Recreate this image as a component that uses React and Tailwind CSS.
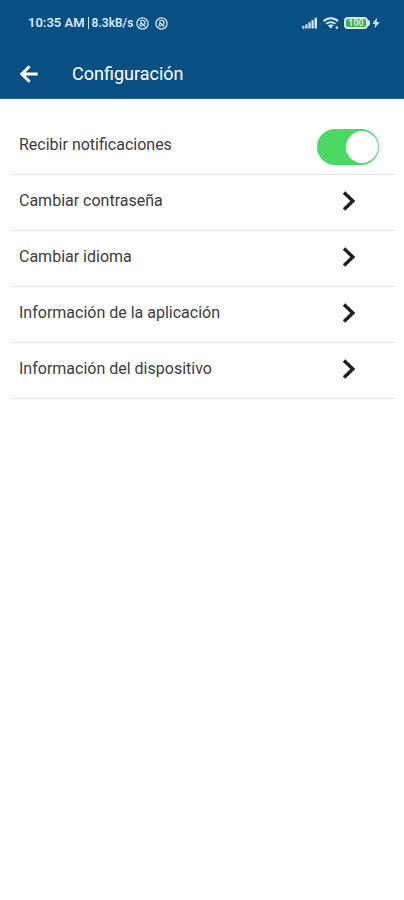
import React, { useState } from "react";

const options = [
  "Cambiar contraseña",
  "Cambiar idioma",
  "Información de la aplicación",
  "Información del dispositivo",
];

function NfcIcon() {
  return (
    <svg viewBox="0 0 13 13" className="w-[13px] h-[13px]" fill="none" stroke="currentColor" aria-hidden="true">
      <circle cx="6.5" cy="6.5" r="5.6" strokeWidth="1.3" />
      <path d="M4 4.2C5.4 3.3 7.4 3.3 8.9 4.4V7.6" strokeWidth="1.3" />
      <path d="M4.4 5.4L9 9.4" strokeWidth="1.5" />
      <path d="M4.1 6.6V9H6.4" strokeWidth="1.2" />
    </svg>
  );
}

function SignalIcon() {
  return (
    <svg viewBox="0 0 16 12" className="w-4 h-3" fill="currentColor" aria-hidden="true">
      <rect x="0.2" y="9" width="2.2" height="2.5" />
      <rect x="3.3" y="7.4" width="2.2" height="4.1" />
      <rect x="6.4" y="5.2" width="2.2" height="6.3" />
      <rect x="9.5" y="3" width="2.2" height="8.5" />
      <rect x="12.6" y="0.8" width="2.4" height="10.7" />
    </svg>
  );
}

function WifiIcon() {
  return (
    <svg viewBox="0 0 16 12" className="w-4 h-3" fill="none" stroke="currentColor" aria-hidden="true">
      <path d="M0.6 4.2C4.6 0.3 11 0.3 15 4.2" strokeWidth="2" />
      <path d="M3.2 6.9C5.8 4.4 9.8 4.4 12.4 6.9" strokeWidth="1.8" />
      <path d="M5 8.6C6.6 7 9 7 10.6 8.6L7.8 11.6Z" fill="currentColor" stroke="none" />
      <path d="M12.6 10.6H15M13.8 9.2V12" strokeWidth="1.2" />
    </svg>
  );
}

function StatusBar() {
  return (
    <div className="h-[46px] flex items-center justify-between pl-7 pr-6 text-[#d9e8f3]">
      <div className="flex items-center text-[12px] leading-4 font-semibold">
        <span className="text-[13px]">10:35 AM</span>
        <span className="mx-[3px] w-px h-3 bg-[#d9e8f3]" />
        <span>8.3kB/s</span>
        <span className="ml-[3px] flex gap-[6px]">
          <NfcIcon />
          <NfcIcon />
        </span>
      </div>
      <div className="flex items-center">
        <SignalIcon />
        <span className="ml-[5px]">
          <WifiIcon />
        </span>
        <div className="ml-[5px] flex items-center">
          <span className="w-6 h-3 rounded-[4px] border-2 border-[#d9e8f3] bg-[#3fae3c] flex items-center justify-center text-[9px] leading-none font-bold">
            100
          </span>
          <span className="w-[2px] h-[6px] rounded-r-sm bg-[#d9e8f3]" />
        </div>
        <svg viewBox="0 0 8 12" className="ml-[2px] w-2 h-3" fill="currentColor" aria-hidden="true">
          <path d="M5 0.8L0.3 6.8H3.2L2.6 11.2L7.7 5H4.6Z" />
        </svg>
      </div>
    </div>
  );
}

function Toggle({ id, checked, onChange }) {
  return (
    <span className="relative inline-flex w-[62px] h-9">
      <input
        id={id}
        type="checkbox"
        role="switch"
        checked={checked}
        onChange={onChange}
        className="peer appearance-none w-full h-full rounded-full bg-gray-300 checked:bg-[#4bd964] cursor-pointer transition-colors"
      />
      <span className="pointer-events-none absolute top-[2px] left-[2px] w-8 h-8 rounded-full bg-white transition-transform peer-checked:translate-x-[27px]" />
    </span>
  );
}

function App() {
  const [notifications, setNotifications] = useState(true);

  return (
    <div className="w-full min-h-screen bg-white font-[Roboto,sans-serif] text-[#3c3c3c]">
      {/* Header */}
      <header className="bg-[#084f84] border-b border-[#2f6a97]">
        <StatusBar />
        <div className="h-[52px] flex items-center pl-5 pt-[3px] gap-[34px] text-white">
          <button aria-label="Volver" className="cursor-pointer">
            <svg viewBox="0 0 18 18" className="w-[18px] h-[18px]" fill="none" stroke="currentColor" strokeWidth="2.9">
              <path d="M9.6 1.2L1.9 9L9.6 16.8M2.4 9H17.6" />
            </svg>
          </button>
          <h1 className="text-[18px] leading-6">Configuración</h1>
        </div>
      </header>

      {/* Settings list */}
      <main className="pt-5 pl-[11px] pr-[9px]">
        <div className="h-14 flex items-center justify-between pl-2 pr-4 border-b border-[#e4e4e4]">
          <label htmlFor="notifications" className="pb-1 text-[16px] leading-6">
            Recibir notificaciones
          </label>
          <Toggle
            id="notifications"
            checked={notifications}
            onChange={(e) => setNotifications(e.target.checked)}
          />
        </div>
        {options.map((option) => (
          <button
            key={option}
            className="w-full h-14 flex items-center justify-between pl-2 pr-[39px] pb-1 border-b border-[#e4e4e4] text-[16px] leading-6 text-left cursor-pointer"
          >
            {option}
            <svg viewBox="0 0 14 20" className="w-[14px] h-5" fill="none" stroke="#1f1f1f" strokeWidth="3.4" aria-hidden="true">
              <path d="M2 1.6L10.8 10L2 18.4" />
            </svg>
          </button>
        ))}
      </main>
    </div>
  );
}

export default App;
